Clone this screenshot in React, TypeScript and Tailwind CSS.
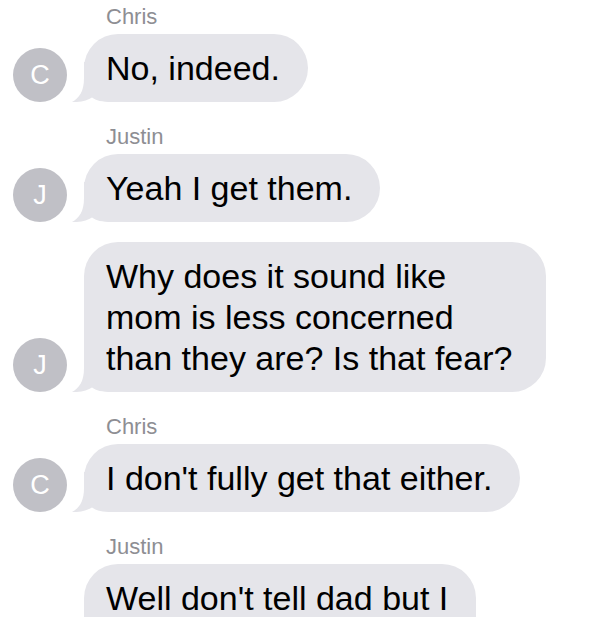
import type { ReactNode } from "react";

type Message = {
  id: number;
  sender: string;
  text: ReactNode;
  showName: boolean;
  clipped?: boolean;
};

const messages: Message[] = [
  { id: 1, sender: "Chris", text: "No, indeed.", showName: true },
  { id: 2, sender: "Justin", text: "Yeah I get them.", showName: true },
  {
    id: 3,
    sender: "Justin",
    text: "Why does it sound like mom is less concerned than they are? Is that fear?",
    showName: false,
  },
  { id: 4, sender: "Chris", text: "I don't fully get that either.", showName: true },
  {
    id: 5,
    sender: "Justin",
    text: "Well don't tell dad but I",
    showName: true,
    clipped: true,
  },
];

export default function App() {
  return (
    <div
      className="h-[617px] w-[590px] overflow-hidden bg-white pt-[4px]"
      style={{ fontFamily: '"Liberation Sans", Arial, sans-serif' }}
    >
      {messages.map((message, index) => (
        <div key={message.id} className={index === 0 ? "" : message.showName ? "mt-[22px]" : "mt-[20px]"}>
          {message.showName ? (
            <div className="mb-[4px] ml-[106px] text-[22px] leading-[26px] text-[#8e8e93]">
              {message.sender}
            </div>
          ) : null}
          <MessageRow sender={message.sender} clipped={message.clipped}>
            {message.text}
          </MessageRow>
        </div>
      ))}
    </div>
  );
}

function MessageRow(props: { sender: string; clipped?: boolean; children: ReactNode }) {
  return (
    <div className="flex items-end">
      {/* the avatar of a bubble that runs off the bottom edge is out of view */}
      {props.clipped ? (
        <div className="ml-[13px] w-[54px] shrink-0" />
      ) : (
        <div className="ml-[13px] flex h-[54px] w-[54px] shrink-0 items-center justify-center rounded-full bg-[#c0c0c6] text-[27px] text-white">
          {props.sender[0]}
        </div>
      )}
      <div
        className={`relative ml-[17px] max-w-[462px] rounded-[34px] bg-[#e5e5ea] pb-[13px] pl-[22px] pr-[28px] pt-[14px] text-[34px] leading-[41px] text-black ${props.clipped ? "min-h-[120px] rounded-b-none" : ""}`}
      >
        {props.clipped ? null : (
          <svg
            className="absolute bottom-0 left-[-12px]"
            width="46"
            height="40"
            viewBox="0 0 46 40"
            aria-hidden="true"
          >
            <path
              d="M12 0 L12 16 C12 30 7 36 0 40 C9 40.5 16 38 20 35.5 C24 38.5 30 40 40 40 L46 40 L46 0 Z"
              fill="#e5e5ea"
            />
          </svg>
        )}
        <span className="relative">{props.children}</span>
      </div>
    </div>
  );
}
